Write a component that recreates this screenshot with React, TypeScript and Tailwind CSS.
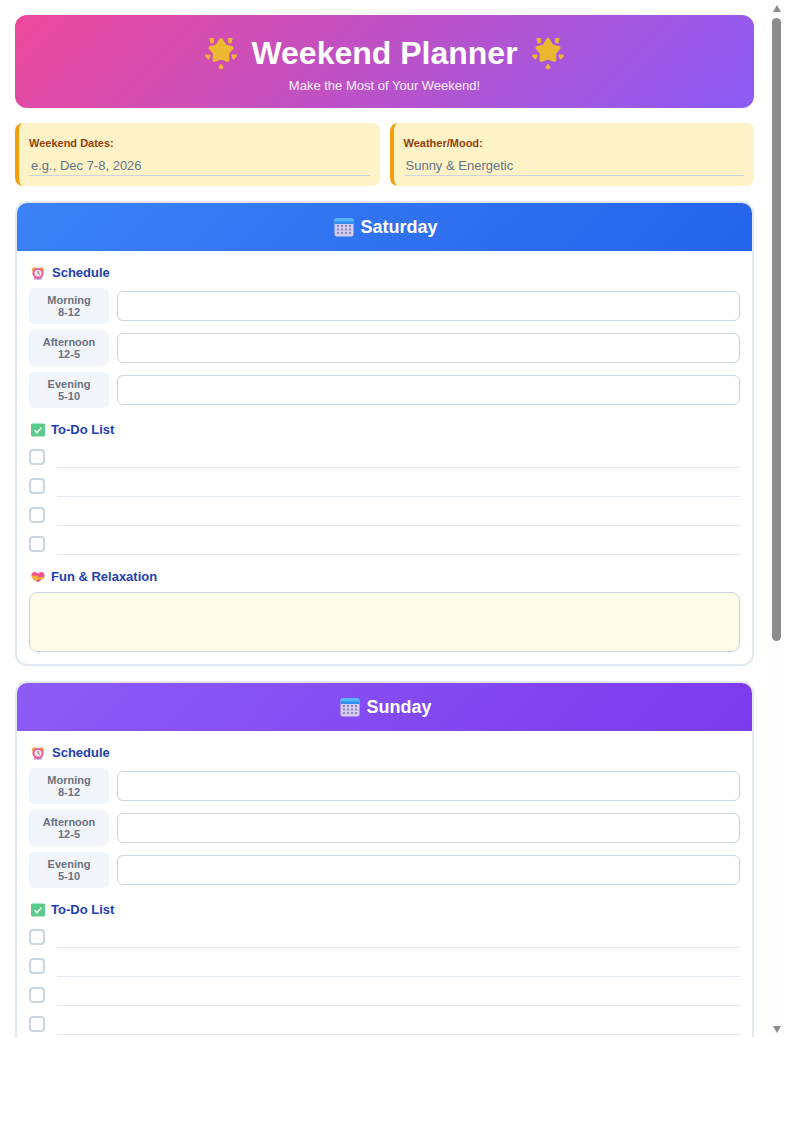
const Star = () => (
  <svg viewBox="0 0 34 34" className="w-[34px] h-[34px] shrink-0">
    <g fill="#ecb731" stroke="#ecb731" strokeLinejoin="round">
      <path strokeWidth="4" d="M17 4 20.800 10.500 27.500 12 23 17 23.500 24 17 21.500 10.500 24 11 17 6.500 12 13.200 10.500z" />
      <path strokeWidth="2" d="M6.500 3 9 3 9 6 7.500 6.500zM27.500 3 25 3 25 6 26.500 6.500zM2 19.500 5.500 19.500 4.500 22.500zM32 19.500 28.500 19.500 29.500 22.500zM17 29 18.500 31.500 17 32.500 15.500 31.500z" />
    </g>
  </svg>
);

const Calendar = () => (
  <svg viewBox="0 0 20 20" className="w-[20px] h-[20px] shrink-0">
    <rect x="0.500" y="1" width="19" height="18.500" rx="2.500" fill="#d6cdee" />
    <path d="M.5 7V3.500A2.500 2.500 0 0 1 3 1h14a2.500 2.500 0 0 1 2.500 2.500V7z" fill="#2f8eea" />
    <path d="M.5 4.500v-1A2.500 2.500 0 0 1 3 1h14a2.500 2.500 0 0 1 2.500 2.500v1z" fill="#55b4f5" />
    <g fill="#8d86c4">
      {[4, 8, 12, 16].flatMap((x) =>
        [9, 12.500, 16].map((y) => <rect key={`${x}-${y}`} x={x - 1} y={y - 1} width="2" height="2" />)
      )}
    </g>
  </svg>
);

const Clock = () => (
  <svg viewBox="0 0 15 15" className="w-[14px] h-[14px] shrink-0">
    <path d="M.5 4 3.500 .8 5.500 2.500 2 6zM14.500 4 11.500 .8 9.500 2.500 13 6z" fill="#e9a93a" />
    <rect x="3" y="11.500" width="9" height="3.500" rx="1.700" fill="#cdb8ee" />
    <circle cx="7.500" cy="7.800" r="6" fill="#ef5a8d" />
    <circle cx="7.500" cy="7.800" r="3.800" fill="#f6e6ee" />
    <path d="M7.500 5.300v2.500l1.800 1.300" stroke="#9a4a70" strokeWidth="1" fill="none" />
  </svg>
);

const Check = () => (
  <svg viewBox="0 0 14 14" className="w-[14px] h-[14px] shrink-0">
    <rect x="0" y="0.500" width="14" height="13" rx="1.500" fill="#5ccb8e" />
    <path d="M3.500 7.200 6 9.500l4.500-5" stroke="#e8f7ee" strokeWidth="1.600" fill="none" />
  </svg>
);

const Heart = () => (
  <svg viewBox="0 0 14 12" className="w-[14px] h-[12px] shrink-0">
    <path d="M7 11.500 1.500 6.500C-.5 4.500.8 1 3.500 1 5 1 6.300 1.800 7 3c.7-1.200 2-2 3.500-2 2.700 0 4 3.500 2 5.500z" fill="#f0508c" />
    <path d="M0 4.500h5.500l2 1.500H14l-1.500 2H8.500L6 9.500H2.500z" fill="#f2b33d" />
  </svg>
);

const SectionTitle = ({ icon, children, gap }: { icon: React.ReactNode; children: React.ReactNode; gap: string }) => (
  <div className={`flex items-center h-[18px] pl-[2px] text-[13px] font-bold text-[#1e40af] ${gap}`}>
    {icon}
    <span>{children}</span>
  </div>
);

const TimeRow = ({ name, time }: { name: string; time: string }) => (
  <div className="flex items-center gap-[8px]">
    <div className="w-[80px] h-[36px] shrink-0 rounded-[6px] bg-[#f1f5f9] flex flex-col items-center justify-center text-center text-[11px] leading-[12px] font-bold text-[#6b7280]">
      <span>{name}</span>
      <span>{time}</span>
    </div>
    <div className="flex-1 h-[30px] rounded-[6px] border border-[#cbd5e1] bg-white" />
  </div>
);

const Todo = () => (
  <div className="flex items-start gap-[12px] h-[29px]">
    <div className="w-[16px] h-[16px] mt-[1px] shrink-0 rounded-[4px] border-2 border-[#cbd5e1] bg-white" />
    <div className="flex-1 h-[20px] border-b border-[#e2e8f0]" />
  </div>
);

const Day = ({ name, headerClass, showFun }: { name: string; headerClass: string; showFun: boolean }) => (
  <section className="rounded-[12px] border-2 border-[#e2e8f0] bg-white overflow-hidden shrink-0">
    <div className={`h-[48px] pl-[3px] flex items-center justify-center gap-[6px] text-[18px] font-bold text-white ${headerClass}`}>
      <Calendar />
      <span>{name}</span>
    </div>
    <div className="px-[12px] pt-[13px] pb-[12px]">
      <SectionTitle icon={<Clock />} gap="gap-[7px]">Schedule</SectionTitle>
      <div className="mt-[6px] flex flex-col gap-[6px]">
        <TimeRow name="Morning" time="8-12" />
        <TimeRow name="Afternoon" time="12-5" />
        <TimeRow name="Evening" time="5-10" />
      </div>
      <div className="mt-[13px]">
        <SectionTitle icon={<Check />} gap="gap-[6px]">To-Do List</SectionTitle>
      </div>
      <div className="mt-[9px] flex flex-col">
        <Todo />
        <Todo />
        <Todo />
        <Todo />
      </div>
      {showFun && (
        <>
          <div className="mt-[4px]">
            <SectionTitle icon={<Heart />} gap="gap-[6px]">Fun &amp; Relaxation</SectionTitle>
          </div>
          <div className="mt-[6px] h-[60px] rounded-[8px] border border-[#cbd5e1] bg-[#fefce8]" />
        </>
      )}
    </div>
  </section>
);

const InfoBox = ({ label, value }: { label: string; value: string }) => (
  <div className="flex-1 h-[63px] rounded-[8px] border-l-4 border-[#f59e0b] bg-[#fef3c7] pl-[10px] pr-[10px] pt-[13px]">
    <div className="text-[11px] leading-[14px] font-bold text-[#92400e]">{label}</div>
    <div className="mt-[5px] h-[21px] border-b border-[#cbd5e1] pl-[2px] text-[13px] leading-[21px] text-[#64748b]">{value}</div>
  </div>
);

export default function App() {
  return (
    <div className="h-[1037px] w-[785px] flex overflow-hidden bg-white font-['Liberation_Sans',Arial,sans-serif]">
      <main className="w-[769px] shrink-0 pl-[15px] pr-[15px] pt-[15px] flex flex-col gap-[15px]">
        <header className="h-[93px] shrink-0 rounded-[12px] bg-[linear-gradient(135deg,#ec4899,#8b5cf6)] flex flex-col items-center text-white">
          <div className="mt-[17px] h-[41px] flex items-center gap-[13px] text-[32px] font-bold">
            <Star />
            <span>Weekend Planner</span>
            <Star />
          </div>
          <div className="mt-[4px] text-[13px] leading-[18px] text-white/90">Make the Most of Your Weekend!</div>
        </header>
        <div className="flex gap-[10px] shrink-0">
          <InfoBox label="Weekend Dates:" value="e.g., Dec 7-8, 2026" />
          <InfoBox label="Weather/Mood:" value="Sunny & Energetic" />
        </div>
        <Day name="Saturday" showFun headerClass="bg-[linear-gradient(135deg,#3b82f6,#2563eb)]" />
        <Day name="Sunday" showFun={false} headerClass="bg-[linear-gradient(135deg,#8b5cf6,#7c3aed)]" />
      </main>
      <aside className="w-[15px] shrink-0 bg-[#fdfdfd] flex flex-col items-center">
        <div className="mt-[5px] w-0 h-0 border-x-[4.500px] border-x-transparent border-b-[7px] border-b-[#8c8c8c]" />
        <div className="mt-[6px] w-[9px] h-[623px] rounded-full bg-[#8c8c8c]" />
        <div className="mt-auto mb-[4px] w-0 h-0 border-x-[4.500px] border-x-transparent border-t-[7px] border-t-[#8c8c8c]" />
      </aside>
    </div>
  );
}
